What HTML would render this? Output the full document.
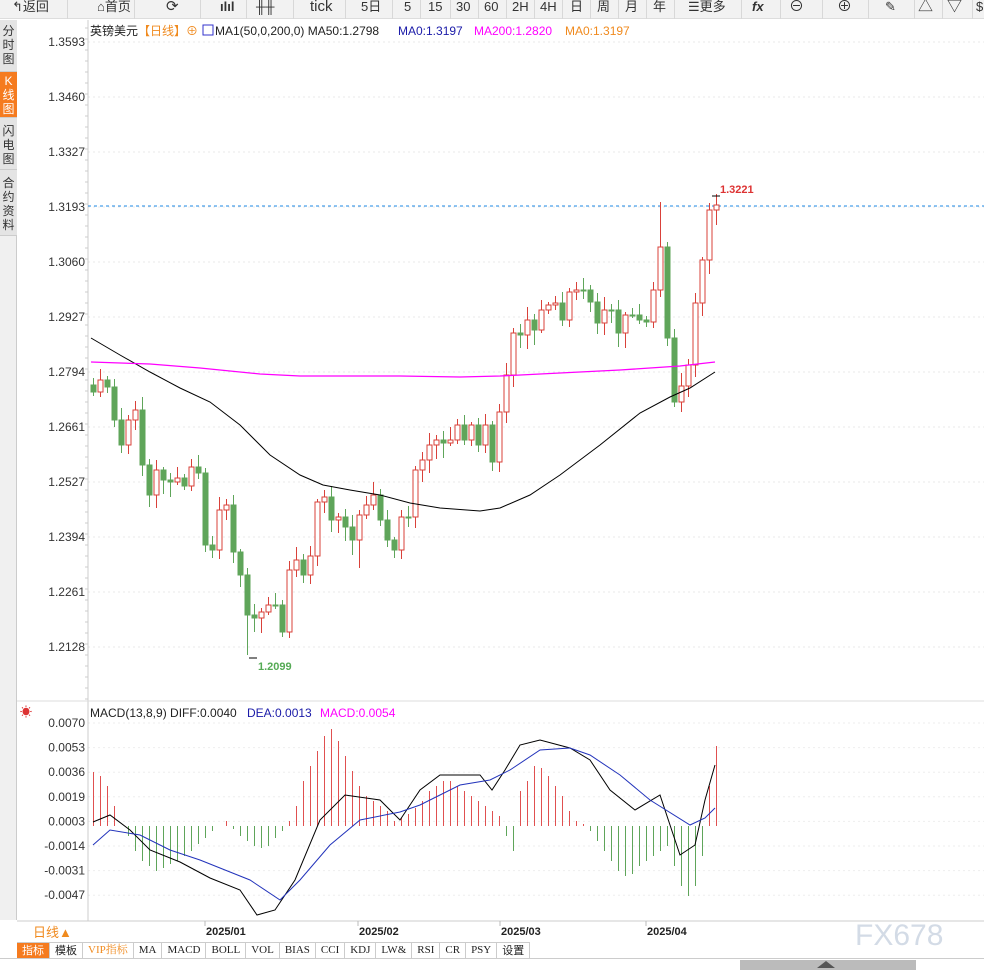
<!DOCTYPE html>
<html><head><meta charset="utf-8">
<style>
*{margin:0;padding:0;box-sizing:border-box}
body{width:984px;height:970px;overflow:hidden;background:#fff;font-family:"Liberation Sans","Noto Sans CJK SC",sans-serif;position:relative}
#tb{position:absolute;left:0;top:0;width:984px;height:19px;background:#f2f2f2;border-bottom:1px solid #ddd;font-size:13px;color:#333}
#tb span{position:absolute;top:-1px;line-height:16px;white-space:nowrap}
#tb i{position:absolute;top:0;width:1px;height:19px;background:#d8d8d8}
#side{position:absolute;left:0;top:20px;width:17px;height:900px;background:#f0f0f0;border-right:1px solid #ccc}
.si{position:absolute;left:0;width:17px;font-size:12px;line-height:14px;text-align:center;color:#333;background:#e4e4e4;border-bottom:1px solid #ccc}
#chart{position:absolute;left:0;top:0}
#tabs{position:absolute;left:17px;top:942px;height:16px;font-size:11px;display:flex;border-top:1px solid #ccc;background:#fff}
#tabs div{border-right:1px solid #ccc;padding:0 5px;line-height:15px;font-family:"Liberation Serif","Noto Serif CJK SC",serif;color:#222}
</style></head><body>
<div id="tb">
<span style="left:12px">↰返回</span><i style="left:67px"></i>
<span style="left:97px">⌂首页</span><i style="left:134px"></i>
<span style="left:166px;font-size:15px">⟳</span><i style="left:200px"></i>
<span style="left:220px;font-weight:bold">ılıl</span><i style="left:246px"></i>
<span style="left:256px;font-weight:bold">╫╫</span><i style="left:293px"></i>
<span style="left:310px;font-size:15px">tick</span><i style="left:345px"></i>
<span style="left:361px">5日</span><i style="left:392px"></i>
<span style="left:404px">5</span><i style="left:420px"></i>
<span style="left:428px">15</span><i style="left:450px"></i>
<span style="left:456px">30</span><i style="left:478px"></i>
<span style="left:484px">60</span><i style="left:506px"></i>
<span style="left:512px">2H</span><i style="left:534px"></i>
<span style="left:540px">4H</span><i style="left:562px"></i>
<span style="left:570px">日</span><i style="left:590px"></i>
<span style="left:597px">周</span><i style="left:618px"></i>
<span style="left:625px">月</span><i style="left:646px"></i>
<span style="left:653px">年</span><i style="left:674px"></i>
<span style="left:688px">☰更多</span><i style="left:741px"></i>
<span style="left:752px;font-weight:bold;font-style:italic">fx</span><i style="left:780px"></i>
<span style="left:789px;font-size:15px">⊖</span><i style="left:822px"></i>
<span style="left:837px;font-size:15px">⊕</span><i style="left:868px"></i>
<span style="left:885px">✎</span><i style="left:914px"></i>
<span style="left:918px;font-size:15px">△</span><i style="left:942px"></i>
<span style="left:947px;font-size:15px">▽</span><i style="left:972px"></i>
<span style="left:976px">$</span>
</div>
<div id="side">
<div class="si" style="top:0;height:52px;padding-top:4px">分<br>时<br>图</div>
<div class="si" style="top:52px;height:46px;background:#f57b1f;color:#fff;padding-top:2px">K<br>线<br>图</div>
<div class="si" style="top:98px;height:52px;padding-top:6px">闪<br>电<br>图</div>
<div class="si" style="top:150px;height:66px;padding-top:6px">合<br>约<br>资<br>料</div>
</div>
<svg id="chart" width="984" height="958" xmlns="http://www.w3.org/2000/svg" font-family="Liberation Sans, Noto Sans CJK SC, sans-serif">
<g id="grid"></g>
<line x1="88" y1="20" x2="88" y2="921" stroke="#ccc"/>
<line x1="17" y1="701" x2="984" y2="701" stroke="#ddd"/>
<line x1="17" y1="921" x2="984" y2="921" stroke="#ccc"/>
<line x1="88" y1="206" x2="984" y2="206" stroke="#1e88e5" stroke-dasharray="3,3"/>
<g id="cd"></g>
<g id="lines"></g>
<text x="90" y="35" font-size="12" fill="#222">英镑美元</text>
<text x="138" y="35" font-size="12" fill="#f08a1e">【日线】</text>
<text x="186" y="35" font-size="12" fill="#f08a1e">⊕</text>
<rect x="203" y="25" width="10" height="10" fill="none" stroke="#33c"/>
<text x="215" y="35" font-size="12" fill="#222">MA1(50,0,200,0) MA50:1.2798</text>
<text x="398" y="35" font-size="12" fill="#1a1aa8">MA0:1.3197</text>
<text x="474" y="35" font-size="12" fill="#f0f">MA200:1.2820</text>
<text x="565" y="35" font-size="12" fill="#f08a1e">MA0:1.3197</text>
<text x="720" y="193" font-size="11" fill="#d33" font-weight="bold">1.3221</text>
<text x="258" y="670" font-size="11" fill="#5a5" font-weight="bold">1.2099</text>
<text x="20" y="716" font-size="12" fill="#d33">☀</text>
<text x="90" y="717" font-size="12" fill="#222">MACD(13,8,9) DIFF:0.0040</text>
<text x="247" y="717" font-size="12" fill="#1a1aa8">DEA:0.0013</text>
<text x="320" y="717" font-size="12" fill="#f0f">MACD:0.0054</text>
<line x1="205" y1="921" x2="205" y2="926" stroke="#bbb"/>
<line x1="358" y1="921" x2="358" y2="926" stroke="#bbb"/>
<line x1="500" y1="921" x2="500" y2="926" stroke="#bbb"/>
<line x1="646" y1="921" x2="646" y2="926" stroke="#bbb"/>
<text x="206" y="935" font-size="11" fill="#222" font-weight="bold">2025/01</text>
<text x="359" y="935" font-size="11" fill="#222" font-weight="bold">2025/02</text>
<text x="501" y="935" font-size="11" fill="#222" font-weight="bold">2025/03</text>
<text x="647" y="935" font-size="11" fill="#222" font-weight="bold">2025/04</text>
<text x="855" y="945" font-size="30" fill="#d3dbe6" font-family="Liberation Sans">FX678</text>
<rect x="17" y="922" width="71" height="19" fill="#fff"/>
<text x="33" y="937" font-size="13" fill="#f08a1e">日线▲</text>
</svg>
<div id="tabs"><div style="background:#f57b1f;color:#fff;font-family:'Noto Sans CJK SC',sans-serif">指标</div><div style="font-family:'Noto Sans CJK SC',sans-serif">模板</div><div style="color:#f08a1e">VIP指标</div><div>MA</div><div>MACD</div><div>BOLL</div><div>VOL</div><div>BIAS</div><div>CCI</div><div>KDJ</div><div>LW&amp;</div><div>RSI</div><div>CR</div><div>PSY</div><div style="font-family:'Noto Sans CJK SC',sans-serif">设置</div></div>
<div style="position:absolute;left:0;top:958px;width:984px;height:12px;background:#fff;border-top:1px solid #ccc"></div>
<div style="position:absolute;left:740px;top:960px;width:176px;height:10px;background:#bbb"></div>
<div style="position:absolute;left:817px;top:961px;width:0;height:0;border-left:9px solid transparent;border-right:9px solid transparent;border-bottom:7px solid #555"></div>
<script>
(function(){
var NS="http://www.w3.org/2000/svg";
function el(p,t,a){var e=document.createElementNS(NS,t);for(var k in a)e.setAttribute(k,a[k]);p.appendChild(e);return e;}
var g=document.getElementById('grid');
var labs=["1.3593","1.3460","1.3327","1.3193","1.3060","1.2927","1.2794","1.2661","1.2527","1.2394","1.2261","1.2128"];
labs.forEach(function(l,i){var y=42+i*55;el(g,'line',{x1:88,y1:y,x2:984,y2:y,stroke:'#e8e8e8','stroke-dasharray':'2,3'});
var t=el(g,'text',{x:85,y:y+4,'font-size':12,fill:'#333','text-anchor':'end'});t.textContent=l;});
for(var yy=28;yy<700;yy+=11)el(g,'line',{x1:85,y1:yy,x2:88,y2:yy,stroke:'#ccc'});
var ml=["0.0070","0.0053","0.0036","0.0019","0.0003","-0.0014","-0.0031","-0.0047"];
ml.forEach(function(l,i){var y=723+i*24.6;el(g,'line',{x1:88,y1:y,x2:984,y2:y,stroke:'#eee','stroke-dasharray':'2,3'});
var t=el(g,'text',{x:85,y:y+4,'font-size':12,fill:'#333','text-anchor':'end'});t.textContent=l;});
var C=[385,392,380,387,420,445,420,410,465,495,470,480,482,478,486,467,473,545,550,510,505,552,575,615,618,612,605,605,632,570,560,575,556,502,497,520,517,527,540,515,505,495,520,540,550,517,517,470,460,445,440,443,440,425,440,425,445,425,462,412,375,333,335,320,330,310,305,303,320,292,290,290,302,323,310,310,333,315,315,320,322,290,247,338,402,386,365,303,260,210,205];
var cd=document.getElementById('cd');
for(var i=1;i<C.length;i++){var x=93+(i-1)*7,o=C[i-1],c=C[i];var up=c<o;var col=up?'#d9413a':'#5fa55a';
var tp=Math.min(o,c),bt=Math.max(o,c);var hw=(i*37%11)+3,lw=(i*53%13)+3;
if(i==23){lw=40}if(i==82){hw=45}if(i==39){lw=28}if(i==84){lw=5}
el(cd,'line',{x1:x+0.5,y1:tp-hw,x2:x+0.5,y2:bt+lw,stroke:col});
if(bt-tp<1)bt=tp+1;
el(cd,'rect',{x:x-2,y:tp,width:5,height:bt-tp,fill:up?'#fff':col,stroke:col});}
el(cd,'line',{x1:249,y1:658,x2:257,y2:658,stroke:'#000'});
el(cd,'line',{x1:712,y1:196,x2:720,y2:196,stroke:'#000'});
var L=document.getElementById('lines');
function pl(pts,col,w){el(L,'polyline',{points:pts,fill:'none',stroke:col,'stroke-width':w||1});}
pl("91,338 120,355 150,372 180,388 210,402 240,425 270,455 300,475 323,485 350,490 380,495 410,503 440,508 480,511 500,508 530,495 560,475 600,445 640,413 670,397 690,388 715,372","#000");
pl("91,362 150,364 200,368 260,374 300,376 400,376 460,377 500,376 560,373 620,370 680,366 715,362","#f0f",1.3);
var H=[54,50,40,20,0,-10,-25,-35,-40,-45,-42,-38,-35,-30,-25,-18,-12,-5,0,5,-3,-10,-15,-20,-22,-20,-12,-5,5,20,45,60,75,90,97,85,70,55,40,30,25,20,15,5,8,12,18,25,35,40,45,45,40,35,30,25,20,15,10,-10,-25,35,45,60,58,50,40,30,15,5,2,-5,-15,-25,-35,-45,-50,-48,-40,-35,-30,-25,-20,-40,-60,-70,-60,-30,-10,40,80];
H.splice(88,1);
for(var j=0;j<H.length;j++){var xx=93+j*7,h=H[j],z=826;el(L,'line',{x1:xx+0.5,y1:z,x2:xx+0.5,y2:z-h,stroke:h>0?'#e05050':'#5fa55a'});}
pl("93,822 110,815 130,830 150,850 180,862 210,878 240,890 257,915 275,910 295,880 320,820 345,795 380,800 400,820 420,790 440,775 480,775 492,790 505,770 520,745 540,740 570,748 590,760 610,790 635,810 660,795 680,855 695,845 705,800 715,765","#000");
pl("93,845 110,830 140,835 170,850 200,860 250,880 280,900 300,880 330,845 360,820 400,812 420,805 460,785 490,780 510,770 540,750 570,748 590,755 620,775 650,800 690,825 705,818 715,808","#2233bb");
})();
</script>
</body></html>
